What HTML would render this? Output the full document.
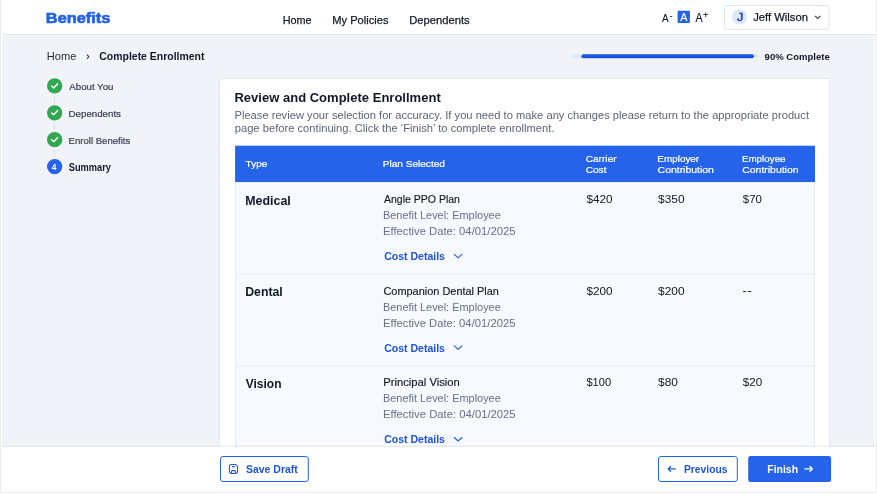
<!DOCTYPE html>
<html lang="en">
<head>
<meta charset="utf-8">
<title>Benefits - Complete Enrollment</title>
<style>
*{box-sizing:border-box;margin:0;padding:0}
html,body{width:877px;height:494px;overflow:hidden;background:#fff}
body{font-family:"Liberation Sans",sans-serif;color:#111827;position:relative}
#shapes{position:absolute;left:0;top:0;width:877px;height:494px;display:block}
#txt{position:absolute;left:0;top:0;width:877px;height:494px;will-change:transform}
.t{position:absolute;white-space:nowrap;line-height:1;transform-origin:0 0}
</style>
</head>
<body>
<svg id="shapes" width="877" height="494" viewBox="0 0 877 494">
  <!-- page frame -->
  <rect x="0" y="0" width="1" height="492" fill="#ececec"/>
  <rect x="876" y="0" width="1" height="492" fill="#ececec"/>
  <rect x="1" y="492" width="875" height="1" fill="#ececec"/>
  <rect x="2" y="0" width="873" height="492" fill="#f1f3f9"/>
  <!-- header -->
  <rect x="2" y="0" width="873" height="34" fill="#ffffff"/>
  <rect x="2" y="34" width="873" height="1" fill="#d8e8f2"/>
  <rect x="2" y="35" width="873" height="1" fill="#f5f5fb"/>
  <!-- font size controls -->
  <rect x="677.6" y="10.8" width="12.3" height="12.2" rx="1" fill="#2563eb"/>
  <!-- user box -->
  <rect x="724.5" y="5.5" width="104.6" height="23.8" rx="2.2" fill="#ffffff" stroke="#dde3f3" stroke-width="1"/>
  <circle cx="739.5" cy="16.9" r="7.5" fill="#dbe7fc"/>
  <path d="M815 15.8 L817.7 18.5 L820.4 15.8" fill="none" stroke="#374151" stroke-width="1.1"/>
  <!-- breadcrumb chevron -->
  <path d="M87 54.7 L88.9 56.8 L87 58.9" fill="none" stroke="#374151" stroke-width="1.1"/>
  <!-- progress -->
  <rect x="571.9" y="54.3" width="186" height="4" rx="2" fill="#dbe7fb"/>
  <rect x="581" y="53.8" width="173.4" height="5" rx="2.5" fill="#f8faff"/>
  <rect x="581.4" y="54.3" width="172.6" height="4" rx="2" fill="#1754e1"/>
  <!-- steps -->
  <g stroke="#d9dde5" stroke-width="1">
    <path d="M54.4 95.8 V102.8"/><path d="M54.4 122.7 V129.7"/><path d="M54.4 149.6 V156.6"/>
  </g>
  <g>
    <circle cx="54.65" cy="85.9" r="7.65" fill="#32a751"/>
    <path d="M51.7 86 L53.7 87.9 L57.7 83.7" fill="none" stroke="#fff" stroke-width="1.4" stroke-linecap="round" stroke-linejoin="round"/>
    <circle cx="54.65" cy="112.8" r="7.65" fill="#32a751"/>
    <path d="M51.7 112.9 L53.7 114.8 L57.7 110.6" fill="none" stroke="#fff" stroke-width="1.4" stroke-linecap="round" stroke-linejoin="round"/>
    <circle cx="54.65" cy="139.7" r="7.65" fill="#32a751"/>
    <path d="M51.7 139.8 L53.7 141.7 L57.7 137.5" fill="none" stroke="#fff" stroke-width="1.4" stroke-linecap="round" stroke-linejoin="round"/>
    <circle cx="54.65" cy="166.6" r="7.65" fill="#2563eb"/>
  </g>
  <!-- card -->
  <rect x="219.5" y="78.5" width="610" height="400" rx="2" fill="#ffffff" stroke="#e5e8ef" stroke-width="1"/>
  <!-- table -->
  <rect x="235.1" y="183.3" width="579.9" height="268" fill="#f6f9fe"/>
  <rect x="235.1" y="183.3" width="0.9" height="268" fill="#e6eaf2"/>
  <rect x="814.1" y="183.3" width="0.9" height="268" fill="#e6eaf2"/>
  <rect x="235.1" y="273.8" width="579.9" height="1" fill="#e9edf4"/>
  <rect x="235.1" y="365.4" width="579.9" height="1" fill="#e9edf4"/>
  <rect x="235.1" y="145.7" width="579.9" height="36.4" fill="#2563eb"/>
  <!-- cost chevrons -->
  <g fill="none" stroke="#2460ea" stroke-width="1.15" stroke-linecap="round" stroke-linejoin="round">
    <path d="M454.3 254.4 L458.1 257.9 L461.9 254.4"/>
    <path d="M454.3 345.95 L458.1 349.45 L461.9 345.95"/>
    <path d="M454.3 437.5 L458.1 441 L461.9 437.5"/>
  </g>
  <!-- footer -->
  <rect x="2" y="447" width="873" height="45" fill="#ffffff"/>
  <rect x="2" y="445" width="873" height="1" fill="#1e293b" fill-opacity="0.025"/>
  <rect x="2" y="446" width="873" height="1" fill="#1e293b" fill-opacity="0.07"/>
  <!-- buttons -->
  <rect x="220.5" y="456.5" width="87.8" height="25" rx="2.5" fill="#ffffff" stroke="#2563eb" stroke-width="1"/>
  <rect x="658.5" y="456.5" width="78.8" height="25" rx="2.5" fill="#ffffff" stroke="#2563eb" stroke-width="1"/>
  <rect x="748.2" y="456" width="82.9" height="26" rx="2.5" fill="#2563eb"/>
  <!-- save icon -->
  <g fill="none" stroke="#1f54e2" stroke-width="1.05" stroke-linejoin="round" stroke-linecap="round">
    <path d="M231.3 464.4 H235.6 L237.5 466.3 V471.7 A1.8 1.8 0 0 1 235.7 473.5 H231.3 A1.8 1.8 0 0 1 229.5 471.7 V466.2 A1.8 1.8 0 0 1 231.3 464.4 Z"/>
    <path d="M231.6 473.4 V471.3 A0.7 0.7 0 0 1 232.3 470.6 H234.7 A0.7 0.7 0 0 1 235.4 471.3 V473.4"/>
    <path d="M232.5 466.6 H234.5"/>
  </g>
  <!-- arrows -->
  <g fill="none" stroke="#1d5be0" stroke-width="1.3" stroke-linejoin="round" stroke-linecap="round">
    <path d="M668.2 468.9 H675.3 M670.6 466.5 L668.2 468.9 L670.6 471.3"/>
  </g>
  <g fill="none" stroke="#ffffff" stroke-width="1.3" stroke-linejoin="round" stroke-linecap="round">
    <path d="M804.9 468.9 H812.4 M810 466.5 L812.4 468.9 L810 471.3"/>
  </g>
</svg>

<div id="txt">
<header>
<div class="t" id="logo" style="left:45px;top:11px;font-size:14.3px;font-weight:700;color:#2160e8;transform:translateX(0.85px) scaleX(1.144);-webkit-text-stroke:0.6px #2160e8">Benefits</div>
<div class="t" id="nav1" style="left:282px;top:15px;font-size:11.1px;font-weight:400;color:#111827;transform:translateX(0.70px) scaleX(0.977);-webkit-text-stroke:0.25px #111827">Home</div>
<div class="t" id="nav2" style="left:332px;top:15px;font-size:11.1px;font-weight:400;color:#111827;transform:translateX(0.25px) scaleX(1.002);-webkit-text-stroke:0.25px #111827">My Policies</div>
<div class="t" id="nav3" style="left:409px;top:15px;font-size:11.1px;font-weight:400;color:#111827;transform:translateX(0.20px) scaleX(1.010);-webkit-text-stroke:0.25px #111827">Dependents</div>
<div class="t" id="fa1" style="left:662px;top:13px;font-size:11.4px;font-weight:400;color:#111827;transform:translateX(0.00px) scaleX(0.881);-webkit-text-stroke:0.15px #111827">A</div>
<div class="t" id="fa1m" style="left:669px;top:12px;font-size:8px;font-weight:400;color:#111827;transform:translateX(0.85px) scaleX(1.000);-webkit-text-stroke:0.2px #111827">-</div>
<div class="t" id="fa2" style="left:680px;top:12px;font-size:11.3px;font-weight:400;color:#fff;transform:translateX(0.35px) scaleX(0.949);-webkit-text-stroke:0.15px #fff">A</div>
<div class="t" id="fa3" style="left:695px;top:12px;font-size:12.9px;font-weight:400;color:#111827;transform:translateX(0.40px) scaleX(0.830);-webkit-text-stroke:0.15px #111827">A</div>
<div class="t" id="fa3p" style="left:703px;top:11px;font-size:9.3px;font-weight:400;color:#111827;transform:translateX(0.10px) scaleX(1.000);-webkit-text-stroke:0.15px #111827">+</div>
<div class="t" id="avJ" style="left:737px;top:12px;font-size:10.6px;font-weight:400;color:#1c38a8;transform:translateX(0.00px) scaleX(1.180);-webkit-text-stroke:0.4px #1c38a8">J</div>
<div class="t" id="user" style="left:753px;top:12px;font-size:11.3px;font-weight:400;color:#111827;transform:translateX(0.15px) scaleX(0.995);-webkit-text-stroke:0.25px #111827">Jeff Wilson</div>
</header>
<nav>
<div class="t" id="bc1" style="left:46px;top:51px;font-size:10.8px;font-weight:400;color:#1f2937;transform:translateX(0.75px) scaleX(1.027)">Home</div>
<div class="t" id="bc2" style="left:99px;top:51px;font-size:10.8px;font-weight:700;color:#111827;transform:translateX(0.30px) scaleX(0.968)">Complete Enrollment</div>
<div class="t" id="pct" style="left:764px;top:52px;font-size:9.9px;font-weight:700;color:#111827;transform:translateX(0.60px) scaleX(0.966)">90% Complete</div>
</nav>
<aside>
<div class="t" id="s1" style="left:69px;top:82px;font-size:9.7px;font-weight:400;color:#374151;transform:translateX(0.35px) scaleX(0.997);-webkit-text-stroke:0.2px #374151">About You</div>
<div class="t" id="s2" style="left:68px;top:109px;font-size:9.7px;font-weight:400;color:#374151;transform:translateX(0.60px) scaleX(1.002);-webkit-text-stroke:0.2px #374151">Dependents</div>
<div class="t" id="s3" style="left:68px;top:136px;font-size:9.7px;font-weight:400;color:#374151;transform:translateX(0.60px) scaleX(0.987);-webkit-text-stroke:0.2px #374151">Enroll Benefits</div>
<div class="t" id="s4" style="left:68px;top:163px;font-size:10px;font-weight:700;color:#111827;transform:translateX(0.75px) scaleX(0.926)">Summary</div>
<div class="t" id="s4n" style="left:51px;top:163px;font-size:8.8px;font-weight:700;color:#fff;transform:translateX(0.85px) scaleX(0.943)">4</div>
</aside>
<main>
<div class="t" id="title" style="left:234px;top:91px;font-size:13.4px;font-weight:700;color:#111827;transform:translateX(0.40px) scaleX(0.973)">Review and Complete Enrollment</div>
<div class="t" id="p1" style="left:234px;top:110px;font-size:10.6px;font-weight:400;color:#5b6474;transform:translateX(0.45px) scaleX(1.054)">Please review your selection for accuracy. If you need to make any changes please return to the appropriate product</div>
<div class="t" id="p2" style="left:234px;top:123px;font-size:10.6px;font-weight:400;color:#5b6474;transform:translateX(0.70px) scaleX(1.056)">page before continuing. Click the &#8216;Finish&#8217; to complete enrollment.</div>
<div class="t" id="th1" style="left:245px;top:159px;font-size:9.4px;font-weight:400;color:#fff;transform:translateX(0.55px) scaleX(1.071);-webkit-text-stroke:0.2px #fff">Type</div>
<div class="t" id="th2" style="left:382px;top:159px;font-size:9.4px;font-weight:400;color:#fff;transform:translateX(0.70px) scaleX(1.075);-webkit-text-stroke:0.2px #fff">Plan Selected</div>
<div class="t" id="th3a" style="left:585px;top:154px;font-size:9.4px;font-weight:400;color:#fff;transform:translateX(0.65px) scaleX(1.082);-webkit-text-stroke:0.2px #fff">Carrier</div>
<div class="t" id="th3b" style="left:585px;top:165px;font-size:9.4px;font-weight:400;color:#fff;transform:translateX(0.65px) scaleX(1.082);-webkit-text-stroke:0.2px #fff">Cost</div>
<div class="t" id="th4a" style="left:657px;top:154px;font-size:9.4px;font-weight:400;color:#fff;transform:translateX(0.35px) scaleX(1.055);-webkit-text-stroke:0.2px #fff">Employer</div>
<div class="t" id="th4b" style="left:657px;top:165px;font-size:9.4px;font-weight:400;color:#fff;transform:translateX(0.60px) scaleX(1.113);-webkit-text-stroke:0.2px #fff">Contribution</div>
<div class="t" id="th5a" style="left:741px;top:154px;font-size:9.4px;font-weight:400;color:#fff;transform:translateX(0.90px) scaleX(1.047);-webkit-text-stroke:0.2px #fff">Employee</div>
<div class="t" id="th5b" style="left:742px;top:165px;font-size:9.4px;font-weight:400;color:#fff;transform:translateX(0.30px) scaleX(1.111);-webkit-text-stroke:0.2px #fff">Contribution</div>
<div class="t" id="r0t" style="left:245px;top:196px;font-size:11.9px;font-weight:700;color:#111827;transform:translateX(0.20px) scaleX(1.045)">Medical</div>
<div class="t" id="r0n" style="left:383px;top:194px;font-size:10.6px;font-weight:400;color:#111827;transform:translateX(0.95px) scaleX(0.993);-webkit-text-stroke:0.15px #111827">Angle PPO Plan</div>
<div class="t" id="r0b" style="left:382px;top:210px;font-size:10.6px;font-weight:400;color:#667085;transform:translateX(0.95px) scaleX(1.031)">Benefit Level: Employee</div>
<div class="t" id="r0e" style="left:382px;top:226px;font-size:10.6px;font-weight:400;color:#667085;transform:translateX(0.95px) scaleX(1.063)">Effective Date: 04/01/2025</div>
<div class="t" id="r0c" style="left:384px;top:251px;font-size:10.9px;font-weight:700;color:#1d52dc;transform:translateX(0.15px) scaleX(0.966)">Cost Details</div>
<div class="t" id="r0a" style="left:586px;top:194px;font-size:10.6px;font-weight:400;color:#111827;transform:translateX(0.40px) scaleX(1.108)">$420</div>
<div class="t" id="r0b2" style="left:658px;top:194px;font-size:10.6px;font-weight:400;color:#111827;transform:translateX(0.05px) scaleX(1.124)">$350</div>
<div class="t" id="r0c2" style="left:742px;top:194px;font-size:10.6px;font-weight:400;color:#111827;transform:translateX(0.85px) scaleX(1.075)">$70</div>
<div class="t" id="r1t" style="left:245px;top:287px;font-size:11.9px;font-weight:700;color:#111827;transform:translateX(0.20px) scaleX(1.033)">Dental</div>
<div class="t" id="r1n" style="left:383px;top:286px;font-size:10.6px;font-weight:400;color:#111827;transform:translateX(0.45px) scaleX(1.032);-webkit-text-stroke:0.15px #111827">Companion Dental Plan</div>
<div class="t" id="r1b" style="left:382px;top:302px;font-size:10.6px;font-weight:400;color:#667085;transform:translateX(0.95px) scaleX(1.031)">Benefit Level: Employee</div>
<div class="t" id="r1e" style="left:382px;top:318px;font-size:10.6px;font-weight:400;color:#667085;transform:translateX(0.95px) scaleX(1.063)">Effective Date: 04/01/2025</div>
<div class="t" id="r1c" style="left:384px;top:343px;font-size:10.9px;font-weight:700;color:#1d52dc;transform:translateX(0.15px) scaleX(0.966)">Cost Details</div>
<div class="t" id="r1a" style="left:586px;top:286px;font-size:10.6px;font-weight:400;color:#111827;transform:translateX(0.40px) scaleX(1.108)">$200</div>
<div class="t" id="r1b2" style="left:658px;top:286px;font-size:10.6px;font-weight:400;color:#111827;transform:translateX(0.05px) scaleX(1.124)">$200</div>
<div class="t" id="r1c2" style="left:742px;top:285px;font-size:10.6px;font-weight:400;color:#111827;transform:translateX(0.75px) scaleX(1.077);letter-spacing:1.2px;-webkit-text-stroke:0.2px #111827">--</div>
<div class="t" id="r2t" style="left:245px;top:379px;font-size:11.9px;font-weight:700;color:#111827;transform:translateX(0.70px) scaleX(1.010)">Vision</div>
<div class="t" id="r2n" style="left:383px;top:377px;font-size:10.6px;font-weight:400;color:#111827;transform:translateX(0.20px) scaleX(1.061);-webkit-text-stroke:0.15px #111827">Principal Vision</div>
<div class="t" id="r2b" style="left:382px;top:393px;font-size:10.6px;font-weight:400;color:#667085;transform:translateX(0.95px) scaleX(1.031)">Benefit Level: Employee</div>
<div class="t" id="r2e" style="left:383px;top:409px;font-size:10.6px;font-weight:400;color:#667085;transform:translateX(0.00px) scaleX(1.064)">Effective Date: 04/01/2025</div>
<div class="t" id="r2c" style="left:384px;top:434px;font-size:10.9px;font-weight:700;color:#1d52dc;transform:translateX(0.15px) scaleX(0.966)">Cost Details</div>
<div class="t" id="r2a" style="left:586px;top:377px;font-size:10.6px;font-weight:400;color:#111827;transform:translateX(0.40px) scaleX(1.047)">$100</div>
<div class="t" id="r2b2" style="left:658px;top:377px;font-size:10.6px;font-weight:400;color:#111827;transform:translateX(0.05px) scaleX(1.121)">$80</div>
<div class="t" id="r2c2" style="left:742px;top:377px;font-size:10.6px;font-weight:400;color:#111827;transform:translateX(0.85px) scaleX(1.102)">$20</div>
</main>
<footer>
<div class="t" id="b1" style="left:245px;top:464px;font-size:11.2px;font-weight:700;color:#1d52dc;transform:translateX(0.90px) scaleX(0.938)">Save Draft</div>
<div class="t" id="b2" style="left:684px;top:464px;font-size:11.2px;font-weight:700;color:#1d52dc;transform:translateX(0.00px) scaleX(0.919)">Previous</div>
<div class="t" id="b3" style="left:767px;top:464px;font-size:11.2px;font-weight:700;color:#fff;transform:translateX(0.35px) scaleX(0.931)">Finish</div>
</footer>
</div>
</body>
</html>
